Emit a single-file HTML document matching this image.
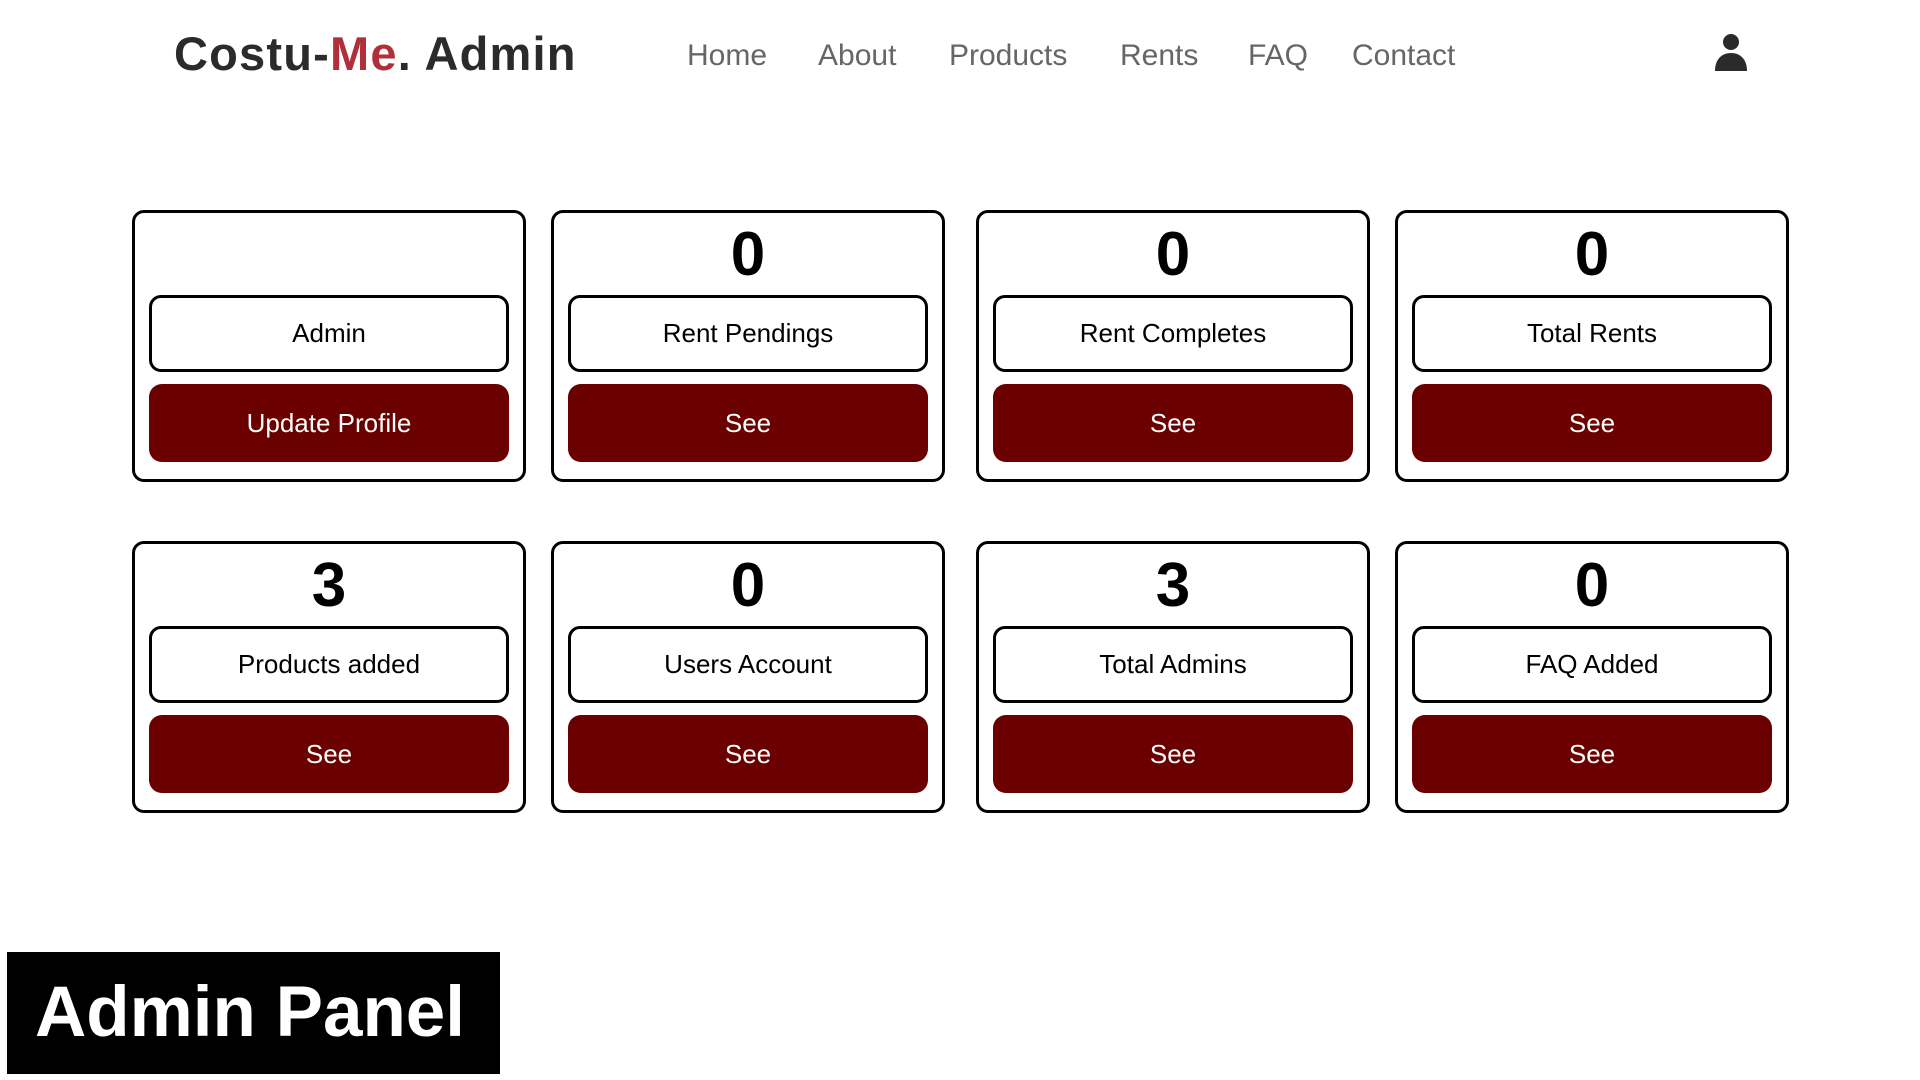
<!DOCTYPE html>
<html><head><meta charset="utf-8"><style>
*{margin:0;padding:0;box-sizing:border-box}
body{width:1920px;height:1080px;background:#fff;position:relative;overflow:hidden;font-family:"Liberation Sans","DejaVu Sans",sans-serif}
.logo{position:absolute;left:174px;top:26px;font-size:47px;font-weight:bold;color:#2b2b2b;letter-spacing:1.2px}
.logo span{color:#b0303a}
.nav{position:absolute;top:39px;font-size:30px;color:#666}
.card{position:absolute;width:394px;height:272px;border:3px solid #000;border-radius:12px}
.num{position:absolute;left:0;right:0;top:7px;text-align:center;font-size:62px;font-weight:bold;color:#000;line-height:70px}
.lab{position:absolute;left:14px;right:14px;top:82px;height:77px;border:3px solid #000;border-radius:12px;text-align:center;line-height:71px;font-size:26px;color:#000}
.btn{position:absolute;left:14px;right:14px;top:171px;height:78px;background:#6b0000;border-radius:13px;text-align:center;line-height:78px;font-size:26px;color:#fff}
.panel{position:absolute;left:7px;top:952px;width:493px;height:122px;background:#000;color:#fff;font-size:71px;font-weight:bold;padding-left:28px;line-height:122px}
</style></head><body>
<div class="logo">Costu-<span>Me</span>. Admin</div>
<div class="nav" style="left:687px">Home</div>
<div class="nav" style="left:818px">About</div>
<div class="nav" style="left:949px">Products</div>
<div class="nav" style="left:1120px">Rents</div>
<div class="nav" style="left:1248px">FAQ</div>
<div class="nav" style="left:1352px">Contact</div>
<svg style="position:absolute;left:1714px;top:33px" width="34" height="38" viewBox="0 0 34 38"><circle cx="17" cy="9" r="8" fill="#2b2b2b"/><path d="M1 38 C1 26 8 20 17 20 C26 20 33 26 33 38 Z" fill="#2b2b2b"/></svg>

<div class="card" style="left:132px;top:210px"><div class="lab">Admin</div><div class="btn">Update Profile</div></div>
<div class="card" style="left:551px;top:210px"><div class="num">0</div><div class="lab">Rent Pendings</div><div class="btn">See</div></div>
<div class="card" style="left:976px;top:210px"><div class="num">0</div><div class="lab">Rent Completes</div><div class="btn">See</div></div>
<div class="card" style="left:1395px;top:210px"><div class="num">0</div><div class="lab">Total Rents</div><div class="btn">See</div></div>

<div class="card" style="left:132px;top:541px"><div class="num">3</div><div class="lab">Products added</div><div class="btn">See</div></div>
<div class="card" style="left:551px;top:541px"><div class="num">0</div><div class="lab">Users Account</div><div class="btn">See</div></div>
<div class="card" style="left:976px;top:541px"><div class="num">3</div><div class="lab">Total Admins</div><div class="btn">See</div></div>
<div class="card" style="left:1395px;top:541px"><div class="num">0</div><div class="lab">FAQ Added</div><div class="btn">See</div></div>

<div class="panel">Admin Panel</div>
</body></html>
